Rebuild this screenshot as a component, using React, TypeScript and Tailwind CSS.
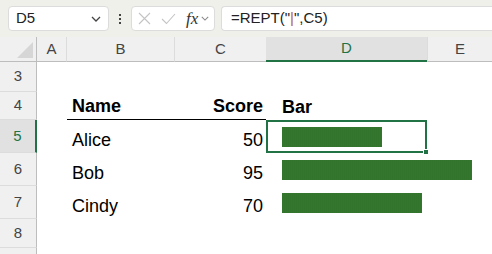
import React from "react";

const font = { fontFamily: '"Liberation Sans", Arial, sans-serif' };

function Chevron({ className }: { className?: string }) {
  return (
    <svg className={className} viewBox="0 0 10 6" fill="none" stroke="currentColor" strokeWidth="1.3">
      <path d="M1 1 L5 5 L9 1" />
    </svg>
  );
}

function Bar({ v }: { v: number }) {
  return (
    <div
      className="shrink-0 h-[20px] bg-[repeating-linear-gradient(90deg,#33742c_0px,#33742c_1px,#516a20_1px,#516a20_2px)]"
      style={{ width: v * 2 }}
    />
  );
}

export default function App() {
  const colHead = "flex items-center justify-center text-[15px] text-[#444] bg-[#f0f0f0] border-b border-[#bdbdbd]";
  const rowHead = "flex items-center justify-center text-[15px] text-[#444] bg-[#f0f0f0] border-r border-[#bdbdbd] border-b border-b-[#dcdcdc]";
  const rows = [
    { n: 3, h: "h-[30px]" },
    { n: 4, h: "h-[28px]" },
    { n: 5, h: "h-[33px]" },
    { n: 6, h: "h-[33px]" },
    { n: 7, h: "h-[33px]" },
    { n: 8, h: "h-[29px]" },
    { n: 9, h: "h-[10px]" },
  ];
  const data: Record<number, { name: string; score: string; bar?: number; bold?: boolean }> = {
    4: { name: "Name", score: "Score", bold: true },
    5: { name: "Alice", score: "50", bar: 50 },
    6: { name: "Bob", score: "95", bar: 95 },
    7: { name: "Cindy", score: "70", bar: 70 },
  };

  return (
    <div className="w-[492px] h-[254px] overflow-hidden bg-white" style={font}>
      {/* Toolbar */}
      <div className="h-[37px] bg-[#eef0e9] flex items-center pl-[8px] gap-0">
        <div className="w-[101px] h-[25px] bg-white rounded-[4px] border border-[#dcdcdc] flex items-center justify-between pl-[7px] pr-[7px] text-[15px] text-[#222]">
          <span>D5</span>
          <Chevron className="w-[10px] h-[6px] text-[#444]" />
        </div>
        <div className="w-[22px] flex flex-col items-center justify-center gap-[2px]">
          <div className="w-[2px] h-[2px] bg-[#444]" />
          <div className="w-[2px] h-[2px] bg-[#444]" />
          <div className="w-[2px] h-[2px] bg-[#444]" />
        </div>
        <div className="w-[84px] h-[25px] bg-white rounded-[4px] border border-[#dcdcdc] flex items-center pl-[6px] pr-[4px]">
          <svg className="w-[13px] h-[13px]" viewBox="0 0 13 13" fill="none" stroke="#c4c4c4" strokeWidth="1.1">
            <path d="M1 1 L12 12 M12 1 L1 12" />
          </svg>
          <svg className="w-[15px] h-[12px] ml-[10px]" viewBox="0 0 15 12" fill="none" stroke="#c4c4c4" strokeWidth="1.1">
            <path d="M1 6 L5.5 10.5 L14 1" />
          </svg>
          <span className="ml-[10px] text-[17px] italic text-[#333] leading-none" style={{ fontFamily: '"Liberation Serif", serif' }}>
            fx
          </span>
          <Chevron className="ml-[3px] w-[8px] h-[5px] text-[#888]" />
        </div>
        <div className="ml-[6px] flex-1 h-[25px] bg-white rounded-l-[4px] border border-r-0 border-[#dcdcdc] flex items-center pl-[9px] text-[15px] text-[#222] whitespace-pre">
          <span>=REPT("</span>
          <span className="text-[#b5651d]">|</span>
          <span>",C5)</span>
        </div>
      </div>

      {/* Column headers */}
      <div className="grid grid-cols-[37px_30px_108px_91px_161px_65px] h-[25px]">
        <div className="bg-[#f0f0f0] border-b border-r border-[#bdbdbd] relative overflow-hidden">
          <div className="absolute right-[3px] bottom-[3px] w-0 h-0 border-l-[16px] border-l-transparent border-b-[16px] border-b-[#d6d6d6]" />
        </div>
        <div className={colHead + " border-r border-r-[#dcdcdc]"}>A</div>
        <div className={colHead + " border-r border-r-[#dcdcdc]"}>B</div>
        <div className={colHead}>C</div>
        <div className="flex items-center justify-center text-[15px] text-[#217346] bg-[#e1e1e1] border-b-2 border-[#217346]">D</div>
        <div className={colHead + " border-l border-l-[#dcdcdc]"}>E</div>
      </div>

      {/* Rows */}
      {rows.map((r) => {
        const d = data[r.n];
        const isSel = r.n === 5;
        return (
          <div key={r.n} className={"grid grid-cols-[37px_30px_108px_91px_161px_65px] " + r.h}>
            <div
              className={
                isSel
                  ? "flex items-center justify-center text-[15px] text-[#217346] bg-[#e1e1e1] border-r-2 border-r-[#217346] border-b border-b-[#dcdcdc]"
                  : rowHead
              }
            >
              {r.n <= 8 ? r.n : ""}
            </div>
            <div />
            <div
              className={
                "flex items-end pb-[4px] pl-[5px] text-[18px] leading-none text-black " +
                (d?.bold ? "font-bold border-b border-black" : "")
              }
            >
              {d?.name}
            </div>
            <div
              className={
                "flex items-end justify-end pb-[4px] pr-[3px] text-[18px] leading-none text-black " +
                (d?.bold ? "font-bold border-b border-black" : "")
              }
            >
              {d?.score}
            </div>
            <div className="relative flex items-center pl-[16px] overflow-visible z-10">
              {d?.bold && <div className="self-end pb-[4px] text-[18px] leading-none font-bold text-black">Bar</div>}
              {d?.bar !== undefined && <Bar v={d.bar} />}
              {isSel && (
                <div className="absolute inset-0 border-2 border-[#217346]">
                  <div className="absolute -right-[4px] -bottom-[4px] w-[6px] h-[6px] bg-[#217346] border border-white" />
                </div>
              )}
            </div>
            <div />
          </div>
        );
      })}
    </div>
  );
}
